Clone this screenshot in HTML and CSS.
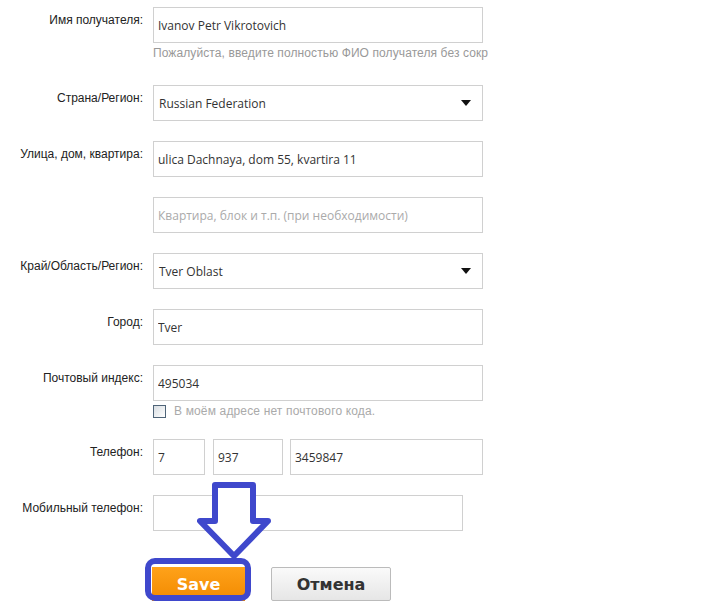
FILE: index.html
```html
<!DOCTYPE html>
<html lang="ru">
<head>
    <meta charset="UTF-8">
    <title>Адрес доставки</title>
    <link rel="stylesheet" href="styles.css">
</head>
<body>

    <div class="address-form">

        <div class="row">
            <label class="label">Имя получателя:</label>
            <div class="field">
                <input class="text-input" type="text" value="Ivanov Petr Vikrotovich">
                <div class="hint">Пожалуйста, введите полностью ФИО получателя без сокр</div>
            </div>
        </div>

        <div class="row">
            <label class="label">Страна/Регион:</label>
            <div class="field">
                <div class="select-box">
                    <span>Russian Federation</span>
                    <span class="caret"></span>
                </div>
            </div>
        </div>

        <div class="row">
            <label class="label">Улица, дом, квартира:</label>
            <div class="field">
                <input class="text-input" type="text" value="ulica Dachnaya, dom 55, kvartira 11">
            </div>
        </div>

        <div class="row">
            <label class="label"></label>
            <div class="field">
                <input class="text-input" type="text" placeholder="Квартира, блок и т.п. (при необходимости)">
            </div>
        </div>

        <div class="row">
            <label class="label">Край/Область/Регион:</label>
            <div class="field">
                <div class="select-box">
                    <span>Tver Oblast</span>
                    <span class="caret"></span>
                </div>
            </div>
        </div>

        <div class="row">
            <label class="label">Город:</label>
            <div class="field">
                <input class="text-input" type="text" value="Tver">
            </div>
        </div>

        <div class="row">
            <label class="label">Почтовый индекс:</label>
            <div class="field">
                <input class="text-input" type="text" value="495034">
                <div class="no-zip">
                    <span class="checkbox"></span>
                    <span>В моём адресе нет почтового кода.</span>
                </div>
            </div>
        </div>

        <div class="row">
            <label class="label">Телефон:</label>
            <div class="field phone">
                <input class="text-input phone-country" type="text" value="7">
                <input class="text-input phone-area" type="text" value="937">
                <input class="text-input phone-number" type="text" value="3459847">
            </div>
        </div>

        <div class="row">
            <label class="label">Мобильный телефон:</label>
            <div class="field">
                <input class="text-input mobile" type="text">
            </div>
        </div>

        <div class="actions">
            <div class="save-wrap">
                <button class="btn btn-save">Save</button>
                <!-- annotation drawn over the form -->
                <span class="save-ring"></span>
                <svg class="pointer-arrow" width="80" height="80" viewBox="0 0 80 80">
                    <path d="M18 3 H56 V39 H71 L37 74 L3 39 H18 Z" fill="#fff" stroke="#3f48cc" stroke-width="6" stroke-linejoin="round"/>
                </svg>
            </div>
            <button class="btn btn-cancel">Отмена</button>
        </div>

    </div>

</body>
</html>
```

FILE: styles.css
```css
body {
    margin: 0;
    padding: 7px 0 0 0;
    background-color: #fff;
    font-family: "Liberation Sans", Arial, sans-serif;
    font-size: 12px;
    color: #222;
}
.address-form {
    width: 500px;
}
.row {
    display: grid;
    grid-template-columns: 143px 330px;
    column-gap: 10px;
    margin-bottom: 20px;
}
.label {
    text-align: right;
    padding-top: 5px;
    line-height: 16px;
    color: #222;
}
.text-input, .select-box {
    box-sizing: border-box;
    width: 330px;
    height: 36px;
    padding: 0 4px;
    border: 1px solid #d0d0d0;
    background: #fff;
    font-family: "Open Sans", sans-serif;
    font-size: 12px;
    color: #333;
    outline: none;
}
.text-input::placeholder {
    color: #aaa;
}
.select-box {
    display: flex;
    align-items: center;
    justify-content: space-between;
    padding: 0 11px 0 5px;
}
.caret {
    width: 0;
    height: 0;
    border-left: 5px solid transparent;
    border-right: 5px solid transparent;
    border-top: 6px solid #111;
}
.hint {
    margin-top: 2px;
    padding-bottom: 4px;
    line-height: 16px;
    color: #999;
    white-space: nowrap;
    letter-spacing: 0.1px;
}
.no-zip {
    display: flex;
    align-items: center;
    gap: 8px;
    margin-top: 2px;
    height: 16px;
    color: #aaa;
    letter-spacing: 0.15px;
}
.checkbox {
    box-sizing: border-box;
    width: 13px;
    height: 13px;
    border: 1px solid #4f6478;
    background: linear-gradient(135deg, #d8dde2, #fff);
}
.phone {
    display: flex;
}
.phone-country {
    width: 52px;
    margin-right: 8px;
}
.phone-area {
    width: 70px;
    margin-right: 7px;
}
.phone-number {
    width: 193px;
}
.mobile {
    width: 310px;
}
.actions {
    display: flex;
    align-items: flex-start;
    gap: 26px;
    padding-left: 152px;
    margin-top: 36px;
}
.save-wrap {
    position: relative;
}
.btn {
    height: 34px;
    font-family: "DejaVu Sans", sans-serif;
    font-weight: bold;
    font-size: 16px;
    cursor: pointer;
}
.btn-save {
    width: 93px;
    border: none;
    background: linear-gradient(#ffa21a, #f28a00);
    color: #fff;
}
.btn-cancel {
    width: 120px;
    border: 1px solid #bbb;
    border-radius: 2px;
    background: linear-gradient(#fafafa, #e6e6e6);
    color: #333;
}
.save-ring {
    position: absolute;
    left: -7px;
    top: -9px;
    width: 94px;
    height: 31px;
    border: 6px solid #3f48cc;
    border-radius: 10px;
}
.pointer-arrow {
    position: absolute;
    left: 45px;
    top: -85px;
}
```
